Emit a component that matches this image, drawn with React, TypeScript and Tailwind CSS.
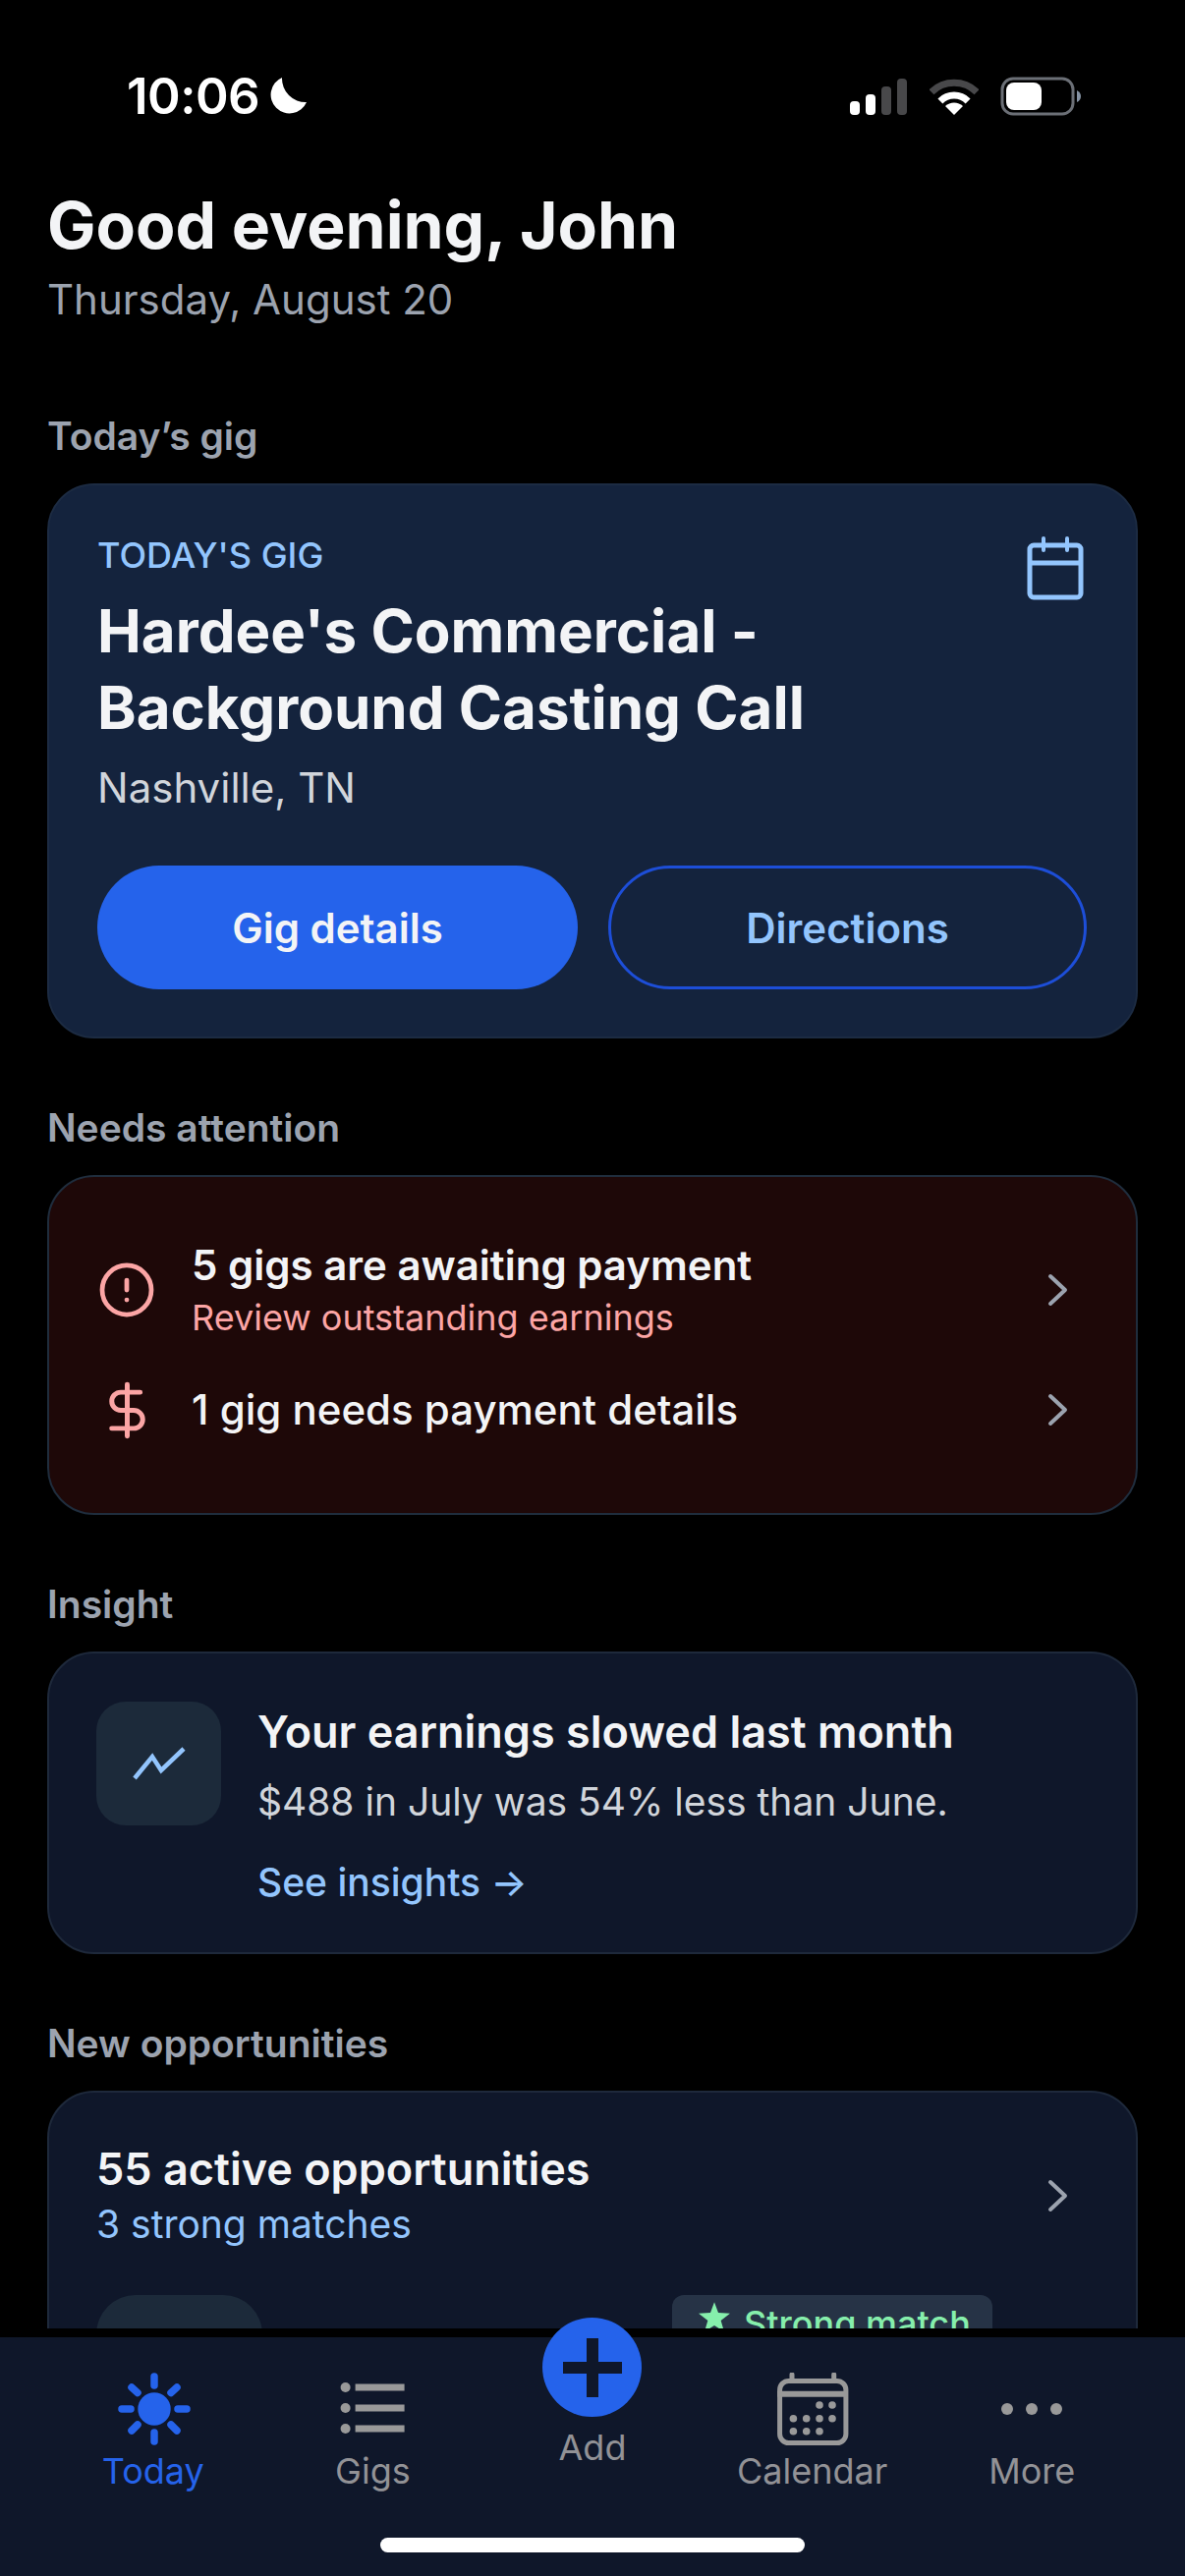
import React from 'react';
import { CircleAlert, DollarSign } from 'lucide-react';

const Chevron = () => (
  <svg width="22" height="34" viewBox="0 0 22 34" fill="none" className="shrink-0">
    <path d="M3 3 L18 17 L3 31" stroke="#9ca3af" strokeWidth="4" strokeLinecap="round" strokeLinejoin="round" />
  </svg>
);

const SectionLabel = ({ text }: { text: string }) => (
  <div className="text-[39px] leading-[52px] font-semibold text-[#9ca3af] mb-[22px]">{text}</div>
);

const SunIcon = () => (
  <svg width="76" height="76" viewBox="0 0 76 76" fill="#2563eb">
    <circle cx="39" cy="37" r="16.7" />
    <g stroke="#2563eb" strokeWidth="7.5" strokeLinecap="round">
      <path d="M39 4 V13" />
      <path d="M39 61 V70" />
      <path d="M6 37 H15" />
      <path d="M63 37 H72" />
      <path d="M16 15 L22 20.5" />
      <path d="M62 15 L56 20.5" />
      <path d="M16 59 L22 53" />
      <path d="M62 59 L56 53" />
    </g>
  </svg>
);

const GigsIcon = () => (
  <svg width="76" height="76" viewBox="0 0 76 76" fill="#999999">
    <circle cx="10.6" cy="15" r="5" />
    <circle cx="10.6" cy="36" r="5" />
    <circle cx="10.6" cy="57" r="5" />
    <rect x="20.6" y="11.5" width="50" height="7" />
    <rect x="20.6" y="32.5" width="50" height="7" />
    <rect x="20.6" y="53.5" width="50" height="7" />
  </svg>
);

const CalendarTabIcon = () => (
  <svg width="76" height="76" viewBox="0 0 76 76" fill="none">
    <rect x="4.6" y="8.5" width="67.3" height="63" rx="9" stroke="#999999" strokeWidth="5" />
    <path d="M2 21.7 H74" stroke="#999999" strokeWidth="6" />
    <path d="M17 2 V8 M59.7 2 V8" stroke="#999999" strokeWidth="5" strokeLinecap="round" />
    <g fill="#999999">
      {[[45, 33], [58, 33], [18.4, 46.7], [31.7, 46.7], [45, 46.7], [58, 46.7], [18.4, 59.7], [31.7, 59.7], [45, 59.7]].map(([x, y]) => (
        <circle key={`${x}-${y}`} cx={x} cy={y} r="3.8" />
      ))}
    </g>
  </svg>
);

const MoreIcon = () => (
  <svg width="76" height="76" viewBox="0 0 76 76" fill="#999999">
    <circle cx="13" cy="37" r="6" />
    <circle cx="38" cy="37" r="6" />
    <circle cx="63" cy="37" r="6" />
  </svg>
);

const Tab = ({ label, icon, active }: { label: string; icon: React.ReactNode; active?: boolean }) => (
  <div className="flex flex-col items-center pt-[36px]">
    {icon}
    <span className={`mt-[2px] text-[36px] leading-[44px] ${active ? 'text-[#2563eb]' : 'text-[#929296]'}`}>{label}</span>
  </div>
);

export default function App() {
  return (
    <div className="w-[1206px] h-[2622px] bg-black overflow-hidden flex flex-col font-[Inter,sans-serif]">
      <div className="h-[2370px] overflow-hidden px-[48px] shrink-0">
        {/* status bar */}
        <div className="h-[189px] -mx-[48px] pl-[129px] pr-[105px] pt-[68px]">
          <div className="flex items-center justify-between h-[60px]">
            <div className="flex items-center gap-[9px]">
              <span className="text-[51px] leading-[60px] font-semibold text-white tracking-[-0.5px]">10:06</span>
              <svg width="40" height="40" viewBox="0 0 40 40" fill="white">
                <path d="M14 1 A19 19 0 1 0 39 26 A24 24 0 0 1 14 1 Z" />
              </svg>
            </div>
            <div className="flex items-center">
              <svg width="58" height="38" viewBox="0 0 58 38">
                <rect x="0" y="24" width="10" height="14" rx="4" fill="white" />
                <rect x="16" y="17" width="10" height="21" rx="4" fill="white" />
                <rect x="32" y="9" width="10" height="29" rx="4" fill="#48484a" />
                <rect x="48" y="1" width="10" height="37" rx="4" fill="#48484a" />
              </svg>
              <svg width="50" height="38" viewBox="0 0 50 38" fill="none" className="ml-[23px]">
                <path d="M2 14.7 A33 33 0 0 1 48 14.7" stroke="#48484a" strokeWidth="7" />
                <path d="M10.9 23.9 A20 20 0 0 1 39.1 23.9" stroke="white" strokeWidth="7" />
                <path d="M25 38 L16 29 A13 13 0 0 1 34 29 Z" fill="white" />
              </svg>
              <svg width="83" height="40" viewBox="0 0 83 40" fill="none" className="ml-[22px]">
                <rect x="2" y="2" width="72" height="36" rx="11" stroke="#6b6f76" strokeWidth="3" />
                <rect x="6" y="6" width="36" height="28" rx="8" fill="white" />
                <path d="M78 14 Q82 16 82 20 Q82 24 78 26 Z" fill="#8592a3" />
              </svg>
            </div>
          </div>
        </div>

        {/* greeting */}
        <h1 className="text-[66px] leading-[80px] font-bold text-[#f3f4f6]">Good evening, John</h1>
        <p className="mt-[10px] text-[42px] leading-[52px] text-[#9ca3af]">Thursday, August 20</p>

        <div className="mt-[87px] flex flex-col gap-[65px]">
          {/* today's gig */}
          <section>
            <SectionLabel text="Today’s gig" />
            <div className="relative h-[565px] rounded-[48px] border-2 border-[#1c2b42] bg-[#14233d] pl-[49px] pr-[50px] pt-[49px]">
              <svg width="60" height="66" viewBox="0 0 60 66" fill="none" className="absolute right-[52px] top-[52px]">
                <rect x="4" y="9" width="52" height="53" rx="4" stroke="#93c5fd" strokeWidth="5" />
                <path d="M4 27 H56" stroke="#93c5fd" strokeWidth="5" />
                <path d="M18 2 V14 M42 2 V14" stroke="#93c5fd" strokeWidth="4" strokeLinecap="round" />
              </svg>
              <div className="text-[36px] leading-[44px] font-medium text-[#93c5fd]">TODAY&apos;S GIG</div>
              <h2 className="mt-[16px] text-[60px] leading-[78px] font-bold text-[#f3f4f6]">
                Hardee&apos;s Commercial -<br />Background Casting Call
              </h2>
              <div className="mt-[17px] text-[42px] leading-[52px] text-[#d1d5db]">Nashville, TN</div>
              <div className="mt-[53px] flex gap-[31px]">
                <div className="w-[489px] h-[126px] rounded-full bg-[#2563eb] flex items-center justify-center text-[42px] font-semibold text-[#f3f4f6]">
                  Gig details
                </div>
                <div className="w-[487px] h-[126px] rounded-full border-[3px] border-[#1d4ed8] flex items-center justify-center text-[42px] font-semibold text-[#93c5fd]">
                  Directions
                </div>
              </div>
            </div>
          </section>

          {/* needs attention */}
          <section>
            <SectionLabel text="Needs attention" />
            <div className="h-[346px] rounded-[48px] border-2 border-[#1f2d3d] bg-[#1e0808] pl-[48px] pr-[68px] pt-[65px]">
              <div className="flex items-center">
                <div className="w-[66px] flex justify-center shrink-0 -ml-[2px]">
                  <CircleAlert size={60} strokeWidth={1.9} color="#fca5a5" />
                </div>
                <div className="ml-[33px] flex-1">
                  <div className="text-[42px] leading-[50px] font-semibold text-[#f3f4f6]">5 gigs are awaiting payment</div>
                  <div className="mt-[6px] text-[36px] leading-[44px] text-[#fca5a5]">Review outstanding earnings</div>
                </div>
                <Chevron />
              </div>
              <div className="mt-[47px] flex items-center h-[50px]">
                <div className="w-[66px] flex justify-center shrink-0 -ml-[2px]">
                  <DollarSign size={63} strokeWidth={1.9} color="#fca5a5" />
                </div>
                <div className="ml-[33px] flex-1 text-[42px] leading-[50px] font-medium text-[#f3f4f6]">1 gig needs payment details</div>
                <Chevron />
              </div>
            </div>
          </section>

          {/* insight */}
          <section>
            <SectionLabel text="Insight" />
            <div className="h-[308px] rounded-[48px] border-2 border-[#1e293b] bg-[#0f172a] pl-[48px] pt-[49px] flex">
              <div className="w-[127px] h-[126px] rounded-[30px] bg-[#1c2a3a] flex items-center justify-center shrink-0">
                <svg width="54" height="36" viewBox="0 0 54 36" fill="none">
                  <path d="M2 33 L20 11 L29 25 L52 3" stroke="#93c5fd" strokeWidth="4.5" strokeLinejoin="miter" />
                </svg>
              </div>
              <div className="ml-[37px] pt-[6px]">
                <div className="text-[45px] leading-[50px] font-semibold text-[#f3f4f6]">Your earnings slowed last month</div>
                <div className="mt-[22px] text-[39px] leading-[48px] text-[#d1d5db]">$488 in July was 54% less than June.</div>
                <div className="mt-[34px] text-[39px] leading-[48px] font-medium text-[#93c5fd]">See insights →</div>
              </div>
            </div>
          </section>

          {/* opportunities */}
          <section>
            <SectionLabel text="New opportunities" />
            <div className="rounded-[48px] border-2 border-[#1e293b] bg-[#0f172a] pl-[48px] pr-[68px] pt-[53px] h-[400px]">
              <div className="flex items-center">
                <div className="flex-1">
                  <div className="text-[45px] leading-[50px] font-semibold text-[#f3f4f6]">55 active opportunities</div>
                  <div className="mt-[9px] text-[39px] leading-[44px] text-[#93c5fd]">3 strong matches</div>
                </div>
                <Chevron />
              </div>
              <div className="mt-[50px] flex items-start">
                <div className="w-[169px] h-[167px] rounded-[40px] bg-[#1c2a3a] shrink-0" />
                <div className="ml-[417px] w-[326px] h-[60px] rounded-[12px] bg-[#263346] flex items-start pl-[27px] pt-[7px]">
                  <svg width="32" height="32" viewBox="0 0 24 24" fill="#86efac" className="mt-[-1px] shrink-0">
                    <path d="M12 1 L15 9 L24 9.5 L17 15 L19.5 23.5 L12 18.7 L4.5 23.5 L7 15 L0 9.5 L9 9 Z" />
                  </svg>
                  <span className="ml-[14px] text-[36px] leading-[44px] font-medium text-[#86efac] whitespace-nowrap">Strong match</span>
                </div>
              </div>
            </div>
          </section>
        </div>
      </div>

      {/* bottom tabs */}
      <nav className="mt-[9px] flex-1 bg-[#0f172a] px-[44px] flex flex-col relative">
        <div className="grid grid-cols-5 h-[204px]">
          <Tab label="Today" icon={<SunIcon />} active />
          <Tab label="Gigs" icon={<GigsIcon />} />
          <div className="flex flex-col items-center -mt-[20px]">
            <div className="w-[101px] h-[101px] rounded-full bg-[#2563eb] flex items-center justify-center shrink-0">
              <svg width="60" height="60" viewBox="0 0 60 60" fill="#0f172a">
                <rect x="24" y="0" width="12" height="60" />
                <rect x="0" y="24" width="60" height="12" />
              </svg>
            </div>
            <span className="mt-[9px] text-[36px] leading-[44px] text-[#929296]">Add</span>
          </div>
          <Tab label="Calendar" icon={<CalendarTabIcon />} />
          <Tab label="More" icon={<MoreIcon />} />
        </div>
        <div className="w-[432px] h-[15px] rounded-full bg-white self-center" />
      </nav>
    </div>
  );
}
